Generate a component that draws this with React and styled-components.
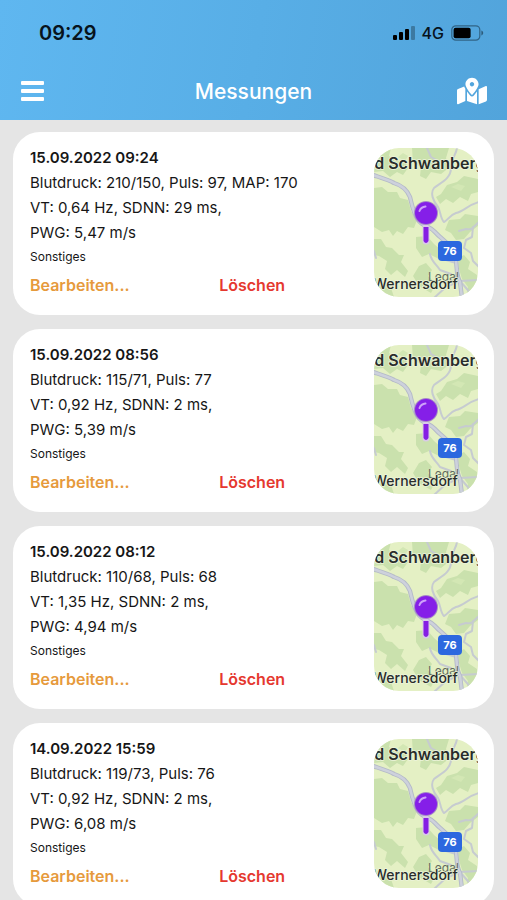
import React from "react";
import styled, { createGlobalStyle } from "styled-components";
import { FaMapMarkedAlt } from "react-icons/fa";

const GlobalStyle = createGlobalStyle`
  * { box-sizing: border-box; }
  body {
    margin: 0;
    background: #e5e5e5;
    color: #161616;
    font-family: Inter, "Liberation Sans", sans-serif;
  }
`;

const Screen = styled.div`
  display: flex;
  flex-direction: column;
  height: 100vh;
`;

const Header = styled.header`
  flex: none;
  background: linear-gradient(100deg, #5fb7f0 0%, #58aee6 50%, #52a4db 100%);
`;

const StatusBar = styled.div`
  display: flex;
  align-items: center;
  justify-content: space-between;
  height: 62px;
  padding: 4px 23px 0 39px;
  color: #07131c;
`;

const Clock = styled.time`
  font-size: 20px;
  font-weight: 600;
`;

const StatusIcons = styled.div`
  display: flex;
  align-items: center;
  gap: 7px;
`;

const Network = styled.span`
  font-size: 16px;
  font-weight: 500;
`;

const NavBar = styled.nav`
  display: grid;
  grid-template-columns: 1fr auto 1fr;
  align-items: center;
  height: 58px;
  padding: 0 20px;
`;

const Title = styled.h1`
  margin: 0;
  color: #fff;
  font-size: 21px;
  font-weight: 500;
`;

const IconButton = styled.button`
  display: flex;
  justify-self: ${(p) => p.$side};
  padding: 0;
  border: 0;
  background: none;
  color: #fff;
  cursor: pointer;
`;

const List = styled.main`
  flex: 1;
  min-height: 0;
  overflow-y: auto;
  scrollbar-width: none;
  display: flex;
  flex-direction: column;
  gap: 14px;
  padding: 12px 13px;
`;

const Card = styled.article`
  flex: none;
  display: flex;
  justify-content: space-between;
  align-items: center;
  padding: 13px 16px 15px 17px;
  border-radius: 27px;
  background: #fff;
`;

const Details = styled.div`
  flex: 1;
  min-width: 0;
`;

const Heading = styled.h2`
  margin: 0;
  font-size: 15px;
  font-weight: 600;
  line-height: 25px;
`;

const Line = styled.p`
  margin: 0;
  font-size: 15px;
  line-height: 25px;
`;

const Note = styled.p`
  margin: 0;
  font-size: 12px;
  line-height: 24px;
`;

const Actions = styled.div`
  display: grid;
  grid-template-columns: 55% 45%;
  justify-items: start;
  height: 31px;
`;

const Action = styled.button`
  padding: 0;
  border: 0;
  background: none;
  color: ${(p) => p.$color};
  font: inherit;
  font-size: 16px;
  font-weight: 600;
  cursor: pointer;
`;

const MapFrame = styled.svg`
  flex: none;
  width: 104px;
  height: 149px;
  border-radius: 25px;
  font-family: Inter, "Liberation Sans", sans-serif;
`;

function MenuIcon() {
  return (
    <svg width="25" height="22" viewBox="0 0 25 22" fill="currentColor">
      <rect x="1" y="1" width="23" height="4" rx="1" />
      <rect x="1" y="9" width="23" height="4" rx="1" />
      <rect x="1" y="17" width="23" height="4" rx="1" />
    </svg>
  );
}

function Signal() {
  return (
    <svg width="23" height="16" viewBox="0 0 23 16" fill="#000">
      <rect x="1" y="10" width="4" height="5" rx="1" />
      <rect x="7" y="7" width="4" height="8" rx="1" />
      <rect x="13" y="4" width="4" height="11" rx="1" />
      <rect x="19" y="1" width="4" height="14" rx="1" opacity="0.28" />
    </svg>
  );
}

function Battery() {
  return (
    <svg width="33" height="16" viewBox="0 0 33 16">
      <rect x="0.8" y="0.8" width="28" height="14.4" rx="4" fill="none" stroke="#07131c" strokeOpacity="0.45" strokeWidth="1.2" />
      <rect x="2.6" y="2.8" width="17" height="10.4" rx="2" fill="#000" />
      <path d="M30.4 5.6c2.4.8 2.4 4 0 4.8z" fill="#07131c" opacity="0.5" />
    </svg>
  );
}

const minorRoads = [
  "M83 0C82 7 77 11 77 20C77 30 68 34 60 40C56 45 59 53 64 59C67 64 66 70 70 74C74 72 76 67 82 65C90 63 94 57 105 54",
  "M53 0L57 9L66 14",
  "M105 74C99 79 99 82 92 81L85 83M99 79L98 89L92 92L90 100L97 105L99 113L105 119",
  "M56 106C57 113 63 117 66 122L77 126",
  "M82 115L72 112M86 133L72 139L60 150M86 133L105 132M86 133L99 148M0 103L2 110",
  "M0 5C8 8 9 4 13 0",
];

const mainRoad =
  "M-1 27C8 30 15 32 20 35C30 38 34 44 36 49C38 57 39 64 44 72C49 79 56 78 61 84C67 91 76 95 80 105C84 113 81 126 86 134L88 150";

function MapPreview() {
  return (
    <MapFrame viewBox="0 0 104 149" role="img" aria-label="Karte: Wernersdorf">
      <rect width="104" height="149" fill="#e4f0c4" />
      <g fill="#cae1ad">
        <path d="M0 0H17L15 8L21 13L31 12L34 20L29 27L23 24L16 29L9 23L0 24Z" />
        <path d="M38 0H75L72 10L76 19L67 26L57 24L52 31L46 28L47 19L39 15Z" />
        <path d="M0 40L8 39L14 44L23 44L26 50L34 52L37 63L43 72L40 80L34 79L29 86L23 83L19 88L15 82L8 84L0 79Z" />
        <path d="M73 37L83 34L90 28L104 31V44L97 46L94 53L86 49L79 55L72 51L66 56L62 49L67 46Z" />
        <path d="M75 72L86 71L91 66L104 68V78L96 84L90 91L82 92L77 85L71 82Z" />
        <path d="M0 91L7 91L12 99L18 100L25 107L30 107L27 114L34 123L31 129L23 122L17 127L11 121L13 113L5 108L0 107Z" />
        <path d="M42 89L53 88L60 96L68 103L65 111L55 106L48 109L42 100Z" />
        <path d="M45 118L52 115L58 122L54 128L62 136L57 145L45 138L39 128Z" />
        <path d="M84 110L90 107L96 114L94 121L103 127V149H92L94 139L88 131L85 121ZM0 130L8 134L17 140L20 149H0Z" />
      </g>
      <path d="M24 9L29 5L34 8L31 13ZM77 39L87 43L91 38L84 36Z" fill="#d3e7b4" />
      <g fill="none" strokeLinecap="round" strokeLinejoin="round">
        {minorRoads.map((d) => (
          <path key={d} d={d} stroke="#c6cbd0" strokeWidth="2" />
        ))}
        <path d={mainRoad} stroke="#b4bac8" strokeWidth="4.4" />
        <path d={mainRoad} stroke="#cdd1dc" strokeWidth="2.6" />
      </g>
      <text x="54" y="133" fontSize="12" fill="#626b60">Legal</text>
      <g fill="#292d2b" stroke="#edf4dc" strokeWidth="1.6" paintOrder="stroke" strokeLinejoin="round" fontWeight="500">
        <text x="-9" y="21" fontSize="16" fontWeight="600">ad Schwanberg</text>
        <text x="-1" y="141" fontSize="14">Wernersdorf</text>
      </g>
      <rect x="64" y="93" width="24" height="20" rx="4" fill="#2c68df" />
      <text x="76" y="107" fontSize="11" fontWeight="700" fill="#fff" textAnchor="middle">76</text>
      <path d="M52 80V93" stroke="#d9c9e8" strokeWidth="7" strokeLinecap="round" />
      <path d="M49.5 79H54.5V93Q52 97 49.5 93Z" fill="#851fe3" />
      <circle cx="52" cy="65" r="12" fill="#a58ac6" />
      <circle cx="52" cy="65" r="11" fill="#851fe8" />
      <path d="M45.5 63Q47 59 51.5 58.5" fill="none" stroke="#cda0fa" strokeWidth="2" strokeLinecap="round" />
    </MapFrame>
  );
}

const measurements = [
  { date: "15.09.2022 09:24", pressure: "Blutdruck: 210/150, Puls: 97, MAP: 170", rate: "VT: 0,64 Hz, SDNN: 29 ms,", wave: "PWG: 5,47 m/s" },
  { date: "15.09.2022 08:56", pressure: "Blutdruck: 115/71, Puls: 77", rate: "VT: 0,92 Hz, SDNN: 2 ms,", wave: "PWG: 5,39 m/s" },
  { date: "15.09.2022 08:12", pressure: "Blutdruck: 110/68, Puls: 68", rate: "VT: 1,35 Hz, SDNN: 2 ms,", wave: "PWG: 4,94 m/s" },
  { date: "14.09.2022 15:59", pressure: "Blutdruck: 119/73, Puls: 76", rate: "VT: 0,92 Hz, SDNN: 2 ms,", wave: "PWG: 6,08 m/s" },
];

function Measurement({ item }) {
  return (
    <Card>
      <Details>
        <Heading>{item.date}</Heading>
        <Line>{item.pressure}</Line>
        <Line>{item.rate}</Line>
        <Line>{item.wave}</Line>
        <Note>Sonstiges</Note>
        <Actions>
          <Action type="button" $color="#e69a3c">Bearbeiten...</Action>
          <Action type="button" $color="#e5382f">Löschen</Action>
        </Actions>
      </Details>
      <MapPreview />
    </Card>
  );
}

export default function App() {
  return (
    <Screen>
      <GlobalStyle />
      <Header>
        <StatusBar>
          <Clock>09:29</Clock>
          <StatusIcons>
            <Signal />
            <Network>4G</Network>
            <Battery />
          </StatusIcons>
        </StatusBar>
        <NavBar>
          <IconButton type="button" aria-label="Menü" $side="start">
            <MenuIcon />
          </IconButton>
          <Title>Messungen</Title>
          <IconButton type="button" aria-label="Karte" $side="end">
            <FaMapMarkedAlt size={30} />
          </IconButton>
        </NavBar>
      </Header>
      <List>
        {measurements.map((item) => (
          <Measurement key={item.date} item={item} />
        ))}
      </List>
    </Screen>
  );
}
